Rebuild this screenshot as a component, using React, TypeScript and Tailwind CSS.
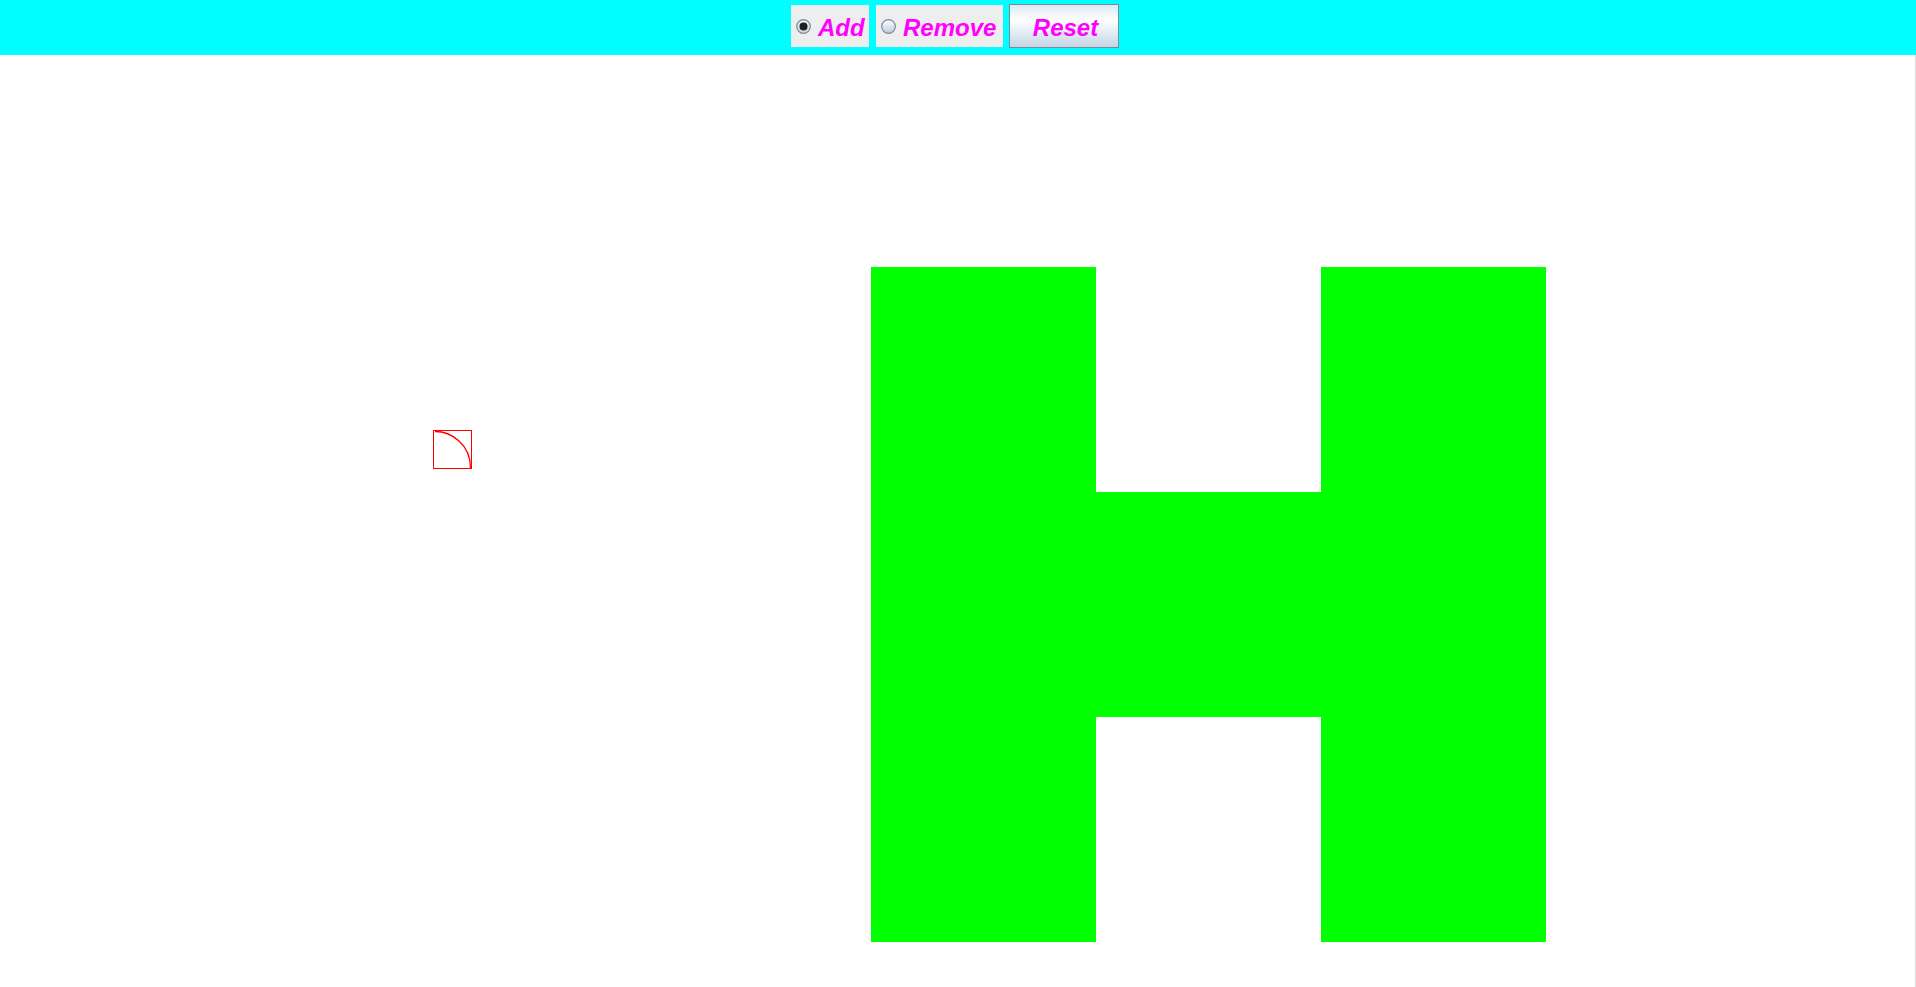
import React from 'react';

const Radio = ({ checked }: { checked: boolean }) => (
  <svg width="15" height="15" viewBox="0 0 15 15" className="shrink-0">
    <defs>
      <linearGradient id={checked ? 'rgOn' : 'rgOff'} x1="0" y1="0" x2="0" y2="1">
        <stop offset="0" stopColor={checked ? '#e8eef4' : '#ffffff'} />
        <stop offset="1" stopColor={checked ? '#c9d6e3' : '#b8cde2'} />
      </linearGradient>
    </defs>
    <circle cx="7.5" cy="7.5" r="6.8" fill={`url(#${checked ? 'rgOn' : 'rgOff'})`} stroke="#7a8a99" strokeWidth="1.2" />
    {checked && <circle cx="7.5" cy="7.5" r="4" fill="#1e1e1e" />}
  </svg>
);

const Toggle = ({ label, checked, width }: { label: string; checked: boolean; width: string }) => (
  <div className={`flex items-center h-[42px] bg-[#eeeeee] pl-[5px] gap-[7px] mt-[1px] ${width}`}>
    <Radio checked={checked} />
    <span className="pt-[3px] text-[24px] font-bold italic text-[#ff00ff] leading-none">{label}</span>
  </div>
);

export default function App() {
  return (
    <div className="w-[1916px] h-[987px] overflow-hidden bg-white flex flex-col" style={{ fontFamily: '"Liberation Sans", Arial, sans-serif' }}>
      <div className="h-[55px] shrink-0 bg-[#00ffff] flex justify-center items-start pt-[4px] pr-[6px]">
        <div className="flex items-start gap-[7px]">
          <Toggle label="Add" checked={true} width="w-[78px]" />
          <div className="flex items-start gap-[6px]">
            <Toggle label="Remove" checked={false} width="w-[127px]" />
            <button className="w-[110px] h-[44px] border border-[#7a8a99] bg-gradient-to-b from-[#dde8f3] via-white via-[35%] to-[#c4d5e6] flex items-center justify-center">
              <span className="pt-[3px] pl-[3px] text-[24px] font-bold italic text-[#ff00ff] leading-none">Reset</span>
            </button>
          </div>
        </div>
      </div>

      <div className="relative flex-1 border-r border-[#dcdcdc]">
        {/* Eraser cursor preview */}
        <svg className="absolute left-[433px] top-[375px]" width="39" height="39" viewBox="0 0 39 39">
          <rect x="0.5" y="0.5" width="38" height="38" fill="none" stroke="#ff0000" strokeWidth="1" />
          <path d="M2 1.5 C18 1.5 37.5 14 37.5 38" fill="none" stroke="#ff0000" strokeWidth="1.3" />
        </svg>

        {/* Shape */}
        <svg className="absolute left-[871px] top-[212px]" width="675" height="675" viewBox="0 0 675 675">
          <path d="M0 0 H225 V225 H450 V0 H675 V675 H450 V450 H225 V675 H0 Z" fill="#00ff00" />
        </svg>
      </div>
    </div>
  );
}
